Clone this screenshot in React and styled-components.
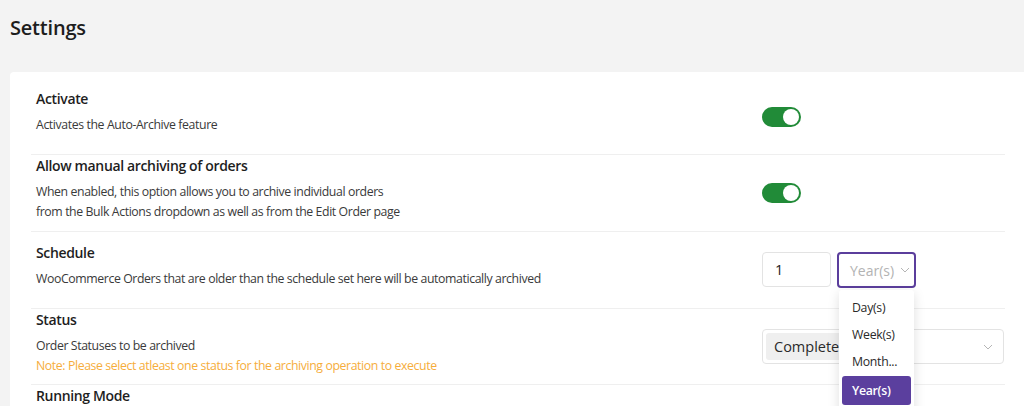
import styled, { createGlobalStyle } from 'styled-components';

const GlobalStyle = createGlobalStyle`
  body {
    margin: 0;
    background: #f3f3f3;
    font-family: "Open Sans", "Noto Sans", sans-serif;
    color: #1e1e1e;
    overflow: hidden;
  }
`;

const Page = styled.div`
  width: 1024px;
  height: 406px;
  display: flex;
  flex-direction: column;
`;

const Heading = styled.h1`
  margin: 0;
  height: 73px;
  padding: 15px 0 0 10px;
  box-sizing: border-box;
  font-size: 20px;
  line-height: 26px;
  font-weight: 600;
  letter-spacing: -0.2px;
  color: #1d1d1d;
`;

const Card = styled.div`
  margin-left: 10px;
  flex: 1;
  background: #fff;
  border-radius: 4px 0 0 0;
  padding: 16px 19px 0 21px;
`;

const Row = styled.div`
  display: grid;
  grid-template-columns: 1fr 242px;
  padding: ${(p) => p.$top}px 1px ${(p) => p.$bottom}px 5px;
  border-bottom: ${(p) => (p.$last ? 'none' : '1px solid #efefef')};
`;

const Info = styled.div`
  display: flex;
  flex-direction: column;
  gap: 6px;
  padding-top: 1px;
`;

const Title = styled.div`
  font-size: 14px;
  line-height: 20px;
  font-weight: 600;
  letter-spacing: -0.35px;
  color: #1e1e1e;
`;

const Desc = styled.div`
  font-size: 12.3px;
  line-height: 20px;
  letter-spacing: -0.4px;
  color: #3a3a3a;
`;

const Note = styled.span`
  display: block;
  color: #f6ad3b;
`;

const Control = styled.div`
  margin-top: ${(p) => p.$offset}px;
  display: flex;
  gap: 6px;
  align-items: flex-start;
  position: relative;
`;

const Toggle = styled.div`
  width: 39px;
  height: 20px;
  border-radius: 10px;
  background: #218b38;
  position: relative;

  &::after {
    content: '';
    position: absolute;
    right: 2px;
    top: 2px;
    width: 16px;
    height: 16px;
    border-radius: 50%;
    background: #fff;
  }
`;

const NumberBox = styled.div`
  width: 69px;
  height: 35px;
  box-sizing: border-box;
  border: 1px solid #e3e3e3;
  border-radius: 4px;
  padding-left: 12px;
  display: flex;
  align-items: center;
  font-size: 14.5px;
  color: #222;
`;

const SelectBox = styled.div`
  width: ${(p) => p.$width}px;
  height: ${(p) => p.$height}px;
  box-sizing: border-box;
  border: ${(p) => (p.$active ? '2px solid #5b3e9c' : '1px solid #e3e3e3')};
  border-radius: 4px;
  display: flex;
  align-items: center;
  padding: 0 10px 0 ${(p) => p.$padLeft}px;
  gap: 6px;
`;

const Placeholder = styled.span`
  font-size: 14px;
  color: #b3b3b3;
`;

const Tag = styled.span`
  background: #efefef;
  border-radius: 3px;
  height: 27px;
  display: flex;
  align-items: center;
  padding: 0 8px;
  font-size: 14.5px;
  color: #2a2a2a;
`;

const Chevron = styled.svg`
  width: 10px;
  height: 6px;
  margin-left: auto;
  flex-shrink: 0;
`;

const Menu = styled.ul`
  position: absolute;
  left: 77px;
  top: 38px;
  width: 75px;
  height: 130px;
  margin: 0;
  padding: 4px 0 0;
  list-style: none;
  background: #fff;
  box-shadow: 0 3px 12px rgba(0, 0, 0, 0.13);
  border-radius: 3px;
  z-index: 2;
`;

const Option = styled.li`
  margin: ${(p) => (p.$selected ? '1px 3px 0' : '0 3px')};
  height: ${(p) => (p.$selected ? 29 : 27)}px;
  padding-left: 10px;
  display: flex;
  align-items: center;
  border-radius: 3px;
  font-size: 12.3px;
  letter-spacing: -0.3px;
  font-weight: ${(p) => (p.$selected ? 600 : 400)};
  background: ${(p) => (p.$selected ? '#5b3f9e' : 'transparent')};
  color: ${(p) => (p.$selected ? '#fff' : '#2a2a2a')};
`;

const StatusControl = styled(Control)`
  z-index: 1;
`;

function ChevronIcon() {
  return (
    <Chevron viewBox="0 0 10 6">
      <path d="M1 1l4 4 4-4" fill="none" stroke="#b5b5b5" strokeWidth="1" />
    </Chevron>
  );
}

const units = ['Day(s)', 'Week(s)', 'Month...', 'Year(s)'];

export default function App() {
  return (
    <Page>
      <GlobalStyle />
      <Heading>Settings</Heading>
      <Card>
        <Row $top={0} $bottom={19}>
          <Info>
            <Title>Activate</Title>
            <Desc>Activates the Auto-Archive feature</Desc>
          </Info>
          <Control $offset={19}>
            <Toggle />
          </Control>
        </Row>
        <Row $top={0} $bottom={9}>
          <Info>
            <Title>Allow manual archiving of orders</Title>
            <Desc>
              When enabled, this option allows you to archive individual orders
              <br />
              from the Bulk Actions dropdown as well as from the Edit Order page
            </Desc>
          </Info>
          <Control $offset={28}>
            <Toggle />
          </Control>
        </Row>
        <Row $top={10} $bottom={19}>
          <Info>
            <Title>Schedule</Title>
            <Desc>WooCommerce Orders that are older than the schedule set here will be automatically archived</Desc>
          </Info>
          <Control $offset={10}>
            <NumberBox>1</NumberBox>
            <SelectBox $active $width={79} $height={36} $padLeft={11}>
              <Placeholder>Year(s)</Placeholder>
              <ChevronIcon />
            </SelectBox>
            <Menu>
              {units.map((u) => (
                <Option key={u} $selected={u === 'Year(s)'}>{u}</Option>
              ))}
            </Menu>
          </Control>
        </Row>
        <Row $top={0} $bottom={8}>
          <Info>
            <Title>Status</Title>
            <Desc>
              Order Statuses to be archived
              <Note>Note: Please select atleast one status for the archiving operation to execute</Note>
            </Desc>
          </Info>
          <StatusControl $offset={20}>
            <SelectBox $width={242} $height={35} $padLeft={3}>
              <Tag>Completed</Tag>
              <ChevronIcon />
            </SelectBox>
          </StatusControl>
        </Row>
        <Row $top={0} $bottom={0} $last>
          <Info>
            <Title>Running Mode</Title>
          </Info>
        </Row>
      </Card>
    </Page>
  );
}
